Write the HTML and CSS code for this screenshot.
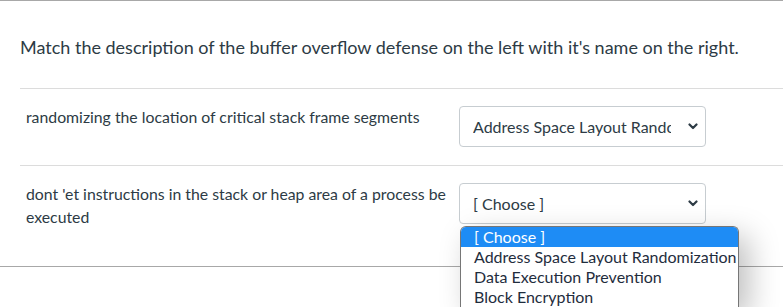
FILE: index.html
```html
<!DOCTYPE html>
<html lang="en">
<head>
  <meta charset="UTF-8" />
  <meta name="viewport" content="width=device-width, initial-scale=1.0"/>
  <title>Matching Question</title>
  <link rel="stylesheet" href="styles.css">
</head>
<body>
  <div class="question">
    <div class="question-text">Match the description of the buffer overflow defense on the left with it's name on the right.</div>

    <div class="answers">
      <div class="answer-row">
        <div class="answer-label">randomizing the location of critical stack frame segments</div>
        <div class="select-wrap">
          <select class="answer-select">
            <option>[ Choose ]</option>
            <option selected>Address Space Layout Randomization</option>
            <option>Data Execution Prevention</option>
            <option>Block Encryption</option>
          </select>
          <svg class="chevron" width="10" height="7" viewBox="0 0 10 7"><path d="M1.5 1.5 L5 5 L8.5 1.5" fill="none" stroke="#2d3b45" stroke-width="2.2" stroke-linecap="round" stroke-linejoin="round"/></svg>
        </div>
      </div>

      <div class="answer-row last">
        <div class="answer-label">dont 'et instructions in the stack or heap area of a process be executed</div>
        <div class="select-wrap">
          <select class="answer-select">
            <option selected>[ Choose ]</option>
            <option>Address Space Layout Randomization</option>
            <option>Data Execution Prevention</option>
            <option>Block Encryption</option>
          </select>
          <svg class="chevron" width="10" height="7" viewBox="0 0 10 7"><path d="M1.5 1.5 L5 5 L8.5 1.5" fill="none" stroke="#2d3b45" stroke-width="2.2" stroke-linecap="round" stroke-linejoin="round"/></svg>

          <!-- lista aberta do select -->
          <ul class="dropdown">
            <li class="active">[ Choose ]</li>
            <li>Address Space Layout Randomization</li>
            <li>Data Execution Prevention</li>
            <li>Block Encryption</li>
          </ul>
        </div>
      </div>
    </div>
  </div>
</body>
</html>
```

FILE: styles.css
```css
body {
  margin: 0;
  min-height: 307px;
  font-family: Lato, "Open Sans", sans-serif;
  color: #2d3b45;
  background: white;
}

.question {
  border-top: 1px solid #a8a8a8;
  border-bottom: 1px solid #a8a8a8;
  padding: 0 0 20px 20px;
}

.question-text {
  font-size: 18px;
  line-height: 27px;
  padding: 33px 0 27px 0;
  border-bottom: 1px solid #dcdcdc;
}

.answer-row {
  display: flex;
  align-items: flex-start;
  gap: 3px;
  padding: 17px 0 18px 6px;
  border-bottom: 1px solid #dcdcdc;
}

.answer-row.last {
  border-bottom: none;
}

.answer-label {
  flex: 0 0 430px;
  font-size: 15.8px;
  line-height: 23px;
  margin-top: -1px;
}

.select-wrap {
  position: relative;
  width: 247px;
}

.answer-select {
  appearance: none;
  -webkit-appearance: none;
  width: 247px;
  height: 41px;
  margin: 0;
  padding: 0 34px 0 13px;
  border: 1px solid #c7cdd1;
  border-radius: 4px;
  background: white;
  font-family: Lato, "Open Sans", sans-serif;
  font-size: 16px;
  color: #2d3b45;
  outline: none;
}

.chevron {
  position: absolute;
  right: 8px;
  top: 17px;
  pointer-events: none;
}

.dropdown {
  position: absolute;
  top: 43px;
  left: 1px;
  width: 277px;
  height: 80px;
  margin: 0;
  padding: 0;
  list-style: none;
  background: white;
  border: 1px solid #767676;
  border-bottom: none;
  border-radius: 6px 6px 0 0;
  overflow: hidden;
  box-shadow: 10px 10px 30px rgba(0,0,0,0.25);
  z-index: 5;
}

.dropdown li {
  font-size: 16px;
  line-height: 20px;
  padding-left: 13px;
  color: #1f2d3d;
  white-space: nowrap;
}

.dropdown li.active {
  background: #1e8cf5;
  color: white;
}
```
